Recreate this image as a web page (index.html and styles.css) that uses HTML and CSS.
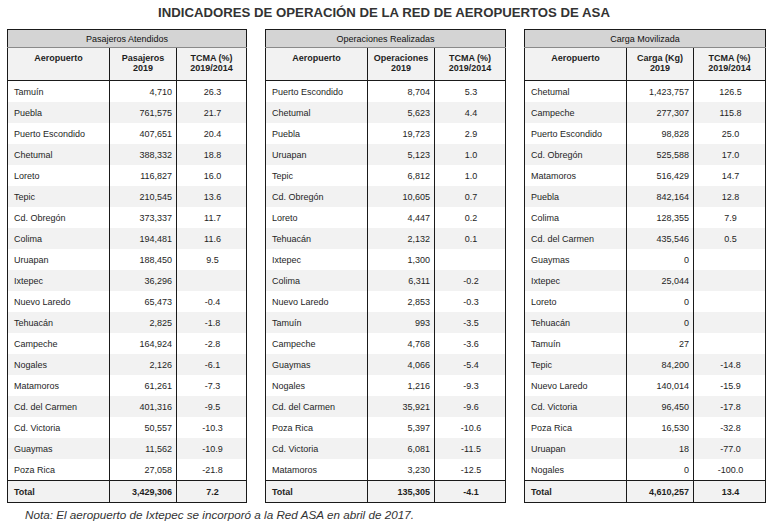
FILE: index.html
```html
<!DOCTYPE html>
<html lang="es">
<head>
<meta charset="utf-8">
<title>Indicadores de Operación ASA</title>
<link rel="stylesheet" href="styles.css">
</head>
<body>
<div class="page">
  <h1 class="title">INDICADORES DE OPERACIÓN DE LA RED DE AEROPUERTOS DE ASA</h1>
  <div class="tables">
    <table class="tbl t1">
      <colgroup><col class="c1"><col class="c2"><col class="c3"></colgroup>
      <thead>
        <tr class="grp"><th colspan="3">Pasajeros Atendidos</th></tr>
        <tr class="cols"><th>Aeropuerto</th><th>Pasajeros<br>2019</th><th>TCMA (%)<br>2019/2014</th></tr>
      </thead>
      <tbody>
        <tr><td>Tamuín</td><td>4,710</td><td>26.3</td></tr>
        <tr><td>Puebla</td><td>761,575</td><td>21.7</td></tr>
        <tr><td>Puerto Escondido</td><td>407,651</td><td>20.4</td></tr>
        <tr><td>Chetumal</td><td>388,332</td><td>18.8</td></tr>
        <tr><td>Loreto</td><td>116,827</td><td>16.0</td></tr>
        <tr><td>Tepic</td><td>210,545</td><td>13.6</td></tr>
        <tr><td>Cd. Obregón</td><td>373,337</td><td>11.7</td></tr>
        <tr><td>Colima</td><td>194,481</td><td>11.6</td></tr>
        <tr><td>Uruapan</td><td>188,450</td><td>9.5</td></tr>
        <tr><td>Ixtepec</td><td>36,296</td><td></td></tr>
        <tr><td>Nuevo Laredo</td><td>65,473</td><td>-0.4</td></tr>
        <tr><td>Tehuacán</td><td>2,825</td><td>-1.8</td></tr>
        <tr><td>Campeche</td><td>164,924</td><td>-2.8</td></tr>
        <tr><td>Nogales</td><td>2,126</td><td>-6.1</td></tr>
        <tr><td>Matamoros</td><td>61,261</td><td>-7.3</td></tr>
        <tr><td>Cd. del Carmen</td><td>401,316</td><td>-9.5</td></tr>
        <tr><td>Cd. Victoria</td><td>50,557</td><td>-10.3</td></tr>
        <tr><td>Guaymas</td><td>11,562</td><td>-10.9</td></tr>
        <tr><td>Poza Rica</td><td>27,058</td><td>-21.8</td></tr>
      </tbody>
      <tfoot>
        <tr class="total"><td>Total</td><td>3,429,306</td><td>7.2</td></tr>
      </tfoot>
    </table>

    <table class="tbl t2">
      <colgroup><col class="c1"><col class="c2"><col class="c3"></colgroup>
      <thead>
        <tr class="grp"><th colspan="3">Operaciones Realizadas</th></tr>
        <tr class="cols"><th>Aeropuerto</th><th>Operaciones<br>2019</th><th>TCMA (%)<br>2019/2014</th></tr>
      </thead>
      <tbody>
        <tr><td>Puerto Escondido</td><td>8,704</td><td>5.3</td></tr>
        <tr><td>Chetumal</td><td>5,623</td><td>4.4</td></tr>
        <tr><td>Puebla</td><td>19,723</td><td>2.9</td></tr>
        <tr><td>Uruapan</td><td>5,123</td><td>1.0</td></tr>
        <tr><td>Tepic</td><td>6,812</td><td>1.0</td></tr>
        <tr><td>Cd. Obregón</td><td>10,605</td><td>0.7</td></tr>
        <tr><td>Loreto</td><td>4,447</td><td>0.2</td></tr>
        <tr><td>Tehuacán</td><td>2,132</td><td>0.1</td></tr>
        <tr><td>Ixtepec</td><td>1,300</td><td></td></tr>
        <tr><td>Colima</td><td>6,311</td><td>-0.2</td></tr>
        <tr><td>Nuevo Laredo</td><td>2,853</td><td>-0.3</td></tr>
        <tr><td>Tamuín</td><td>993</td><td>-3.5</td></tr>
        <tr><td>Campeche</td><td>4,768</td><td>-3.6</td></tr>
        <tr><td>Guaymas</td><td>4,066</td><td>-5.4</td></tr>
        <tr><td>Nogales</td><td>1,216</td><td>-9.3</td></tr>
        <tr><td>Cd. del Carmen</td><td>35,921</td><td>-9.6</td></tr>
        <tr><td>Poza Rica</td><td>5,397</td><td>-10.6</td></tr>
        <tr><td>Cd. Victoria</td><td>6,081</td><td>-11.5</td></tr>
        <tr><td>Matamoros</td><td>3,230</td><td>-12.5</td></tr>
      </tbody>
      <tfoot>
        <tr class="total"><td>Total</td><td>135,305</td><td>-4.1</td></tr>
      </tfoot>
    </table>

    <table class="tbl t3">
      <colgroup><col class="c1"><col class="c2"><col class="c3"></colgroup>
      <thead>
        <tr class="grp"><th colspan="3">Carga Movilizada</th></tr>
        <tr class="cols"><th>Aeropuerto</th><th>Carga (Kg)<br>2019</th><th>TCMA (%)<br>2019/2014</th></tr>
      </thead>
      <tbody>
        <tr><td>Chetumal</td><td>1,423,757</td><td>126.5</td></tr>
        <tr><td>Campeche</td><td>277,307</td><td>115.8</td></tr>
        <tr><td>Puerto Escondido</td><td>98,828</td><td>25.0</td></tr>
        <tr><td>Cd. Obregón</td><td>525,588</td><td>17.0</td></tr>
        <tr><td>Matamoros</td><td>516,429</td><td>14.7</td></tr>
        <tr><td>Puebla</td><td>842,164</td><td>12.8</td></tr>
        <tr><td>Colima</td><td>128,355</td><td>7.9</td></tr>
        <tr><td>Cd. del Carmen</td><td>435,546</td><td>0.5</td></tr>
        <tr><td>Guaymas</td><td>0</td><td></td></tr>
        <tr><td>Ixtepec</td><td>25,044</td><td></td></tr>
        <tr><td>Loreto</td><td>0</td><td></td></tr>
        <tr><td>Tehuacán</td><td>0</td><td></td></tr>
        <tr><td>Tamuín</td><td>27</td><td></td></tr>
        <tr><td>Tepic</td><td>84,200</td><td>-14.8</td></tr>
        <tr><td>Nuevo Laredo</td><td>140,014</td><td>-15.9</td></tr>
        <tr><td>Cd. Victoria</td><td>96,450</td><td>-17.8</td></tr>
        <tr><td>Poza Rica</td><td>16,530</td><td>-32.8</td></tr>
        <tr><td>Uruapan</td><td>18</td><td>-77.0</td></tr>
        <tr><td>Nogales</td><td>0</td><td>-100.0</td></tr>
      </tbody>
      <tfoot>
        <tr class="total"><td>Total</td><td>4,610,257</td><td>13.4</td></tr>
      </tfoot>
    </table>
  </div>
  <p class="note">Nota: El aeropuerto de Ixtepec se incorporó a la Red ASA en abril de 2017.</p>
</div>
</body>
</html>
```

FILE: styles.css
```css
html, body {
  margin: 0;
  padding: 0;
  background: #ffffff;
}

.page {
  width: 774px;
  height: 522px;
  padding-top: 5px;
  box-sizing: border-box;
  font-family: "Liberation Sans", Arial, sans-serif;
  color: #1e1e1e;
}

.title {
  margin: 0 6px 8px 0;
  font-size: 13.2px;
  line-height: 16px;
  font-weight: bold;
  color: #333333;
  text-align: center;
}

.tables {
  display: flex;
  gap: 18px;
  padding-left: 7px;
}

.tbl {
  border-collapse: collapse;
  table-layout: fixed;
  font-size: 9px;
  border: 1px solid #1a1a1a;
}

.t1 { width: 240px; }
.t2 { width: 241px; }
.t3 { width: 242px; }

.c1 { width: 102px; }
.c2 { width: 67px; }

.grp th {
  height: 17px;
  padding: 0;
  background: #d4d4d4;
  font-weight: normal;
  font-size: 9px;
  color: #111111;
  text-align: center;
  vertical-align: middle;
  border-bottom: 1px solid #8a8a8a;
}

.cols th {
  height: 33px;
  padding: 5px 2px 0 2px;
  box-sizing: border-box;
  background: #f2f2f2;
  font-weight: bold;
  line-height: 10px;
  text-align: center;
  vertical-align: top;
  border-left: 1px solid #1a1a1a;
  border-bottom: 1px solid #1a1a1a;
}

.tbl td {
  height: 21px;
  padding: 0 4px 0 6px;
  line-height: 12px;
  vertical-align: middle;
  border-left: 1px solid #1a1a1a;
  white-space: nowrap;
}

.tbl td:nth-child(2) {
  text-align: right;
}

.tbl td:nth-child(3) {
  text-align: center;
}

.tbl tbody tr:nth-child(even) td {
  background: #f2f2f2;
}

.total td {
  background: #f2f2f2;
  font-weight: bold;
  border-top: 1px solid #1a1a1a;
}

.note {
  margin: 5px 0 0 25px;
  font-size: 11.7px;
  line-height: 14px;
  font-style: italic;
  color: #333333;
}
```
